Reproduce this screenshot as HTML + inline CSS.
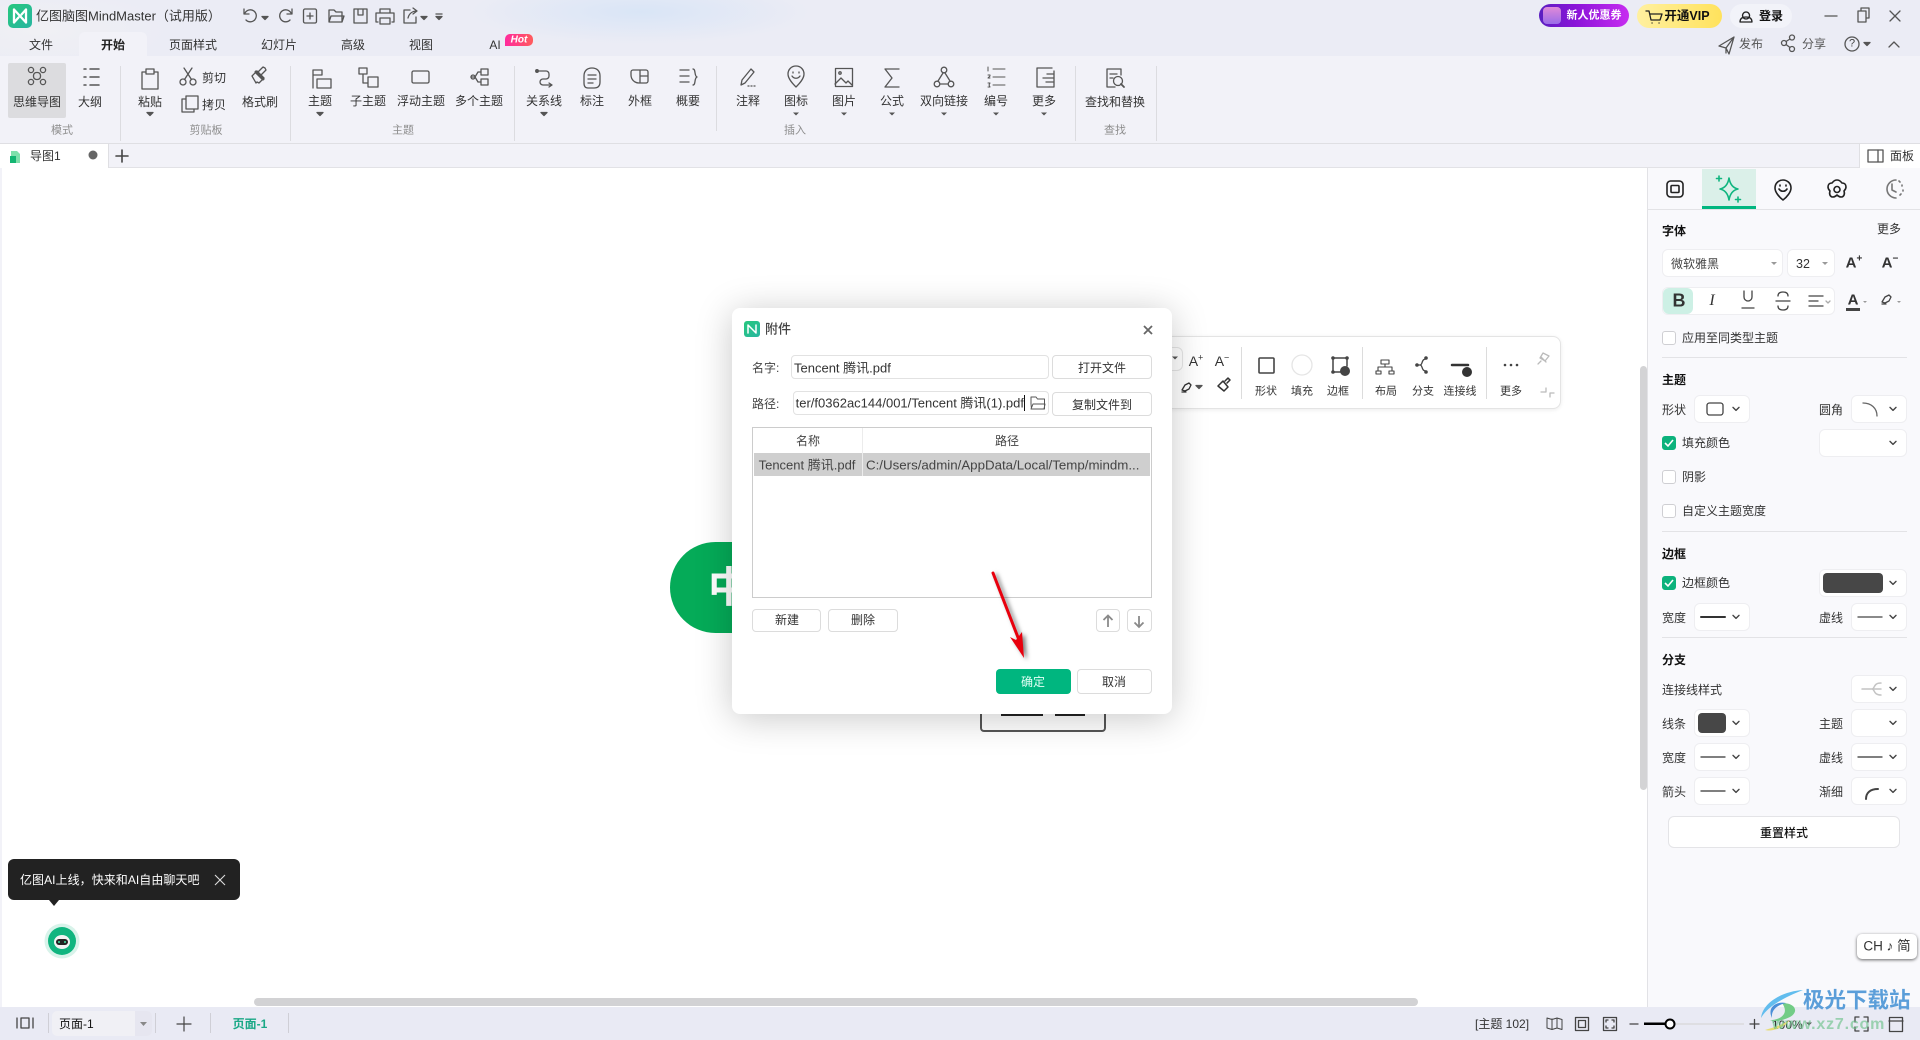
<!DOCTYPE html>
<html lang="zh-CN"><head><meta charset="utf-8"><title>亿图脑图MindMaster</title>
<style>
html,body{margin:0;padding:0;width:1920px;height:1040px;overflow:hidden;background:#fff}
body{position:relative;font:12px "Liberation Sans","Noto Sans CJK SC",sans-serif;color:#333}
div,svg,span.a{position:absolute}
.t,.l,.r{position:absolute;white-space:nowrap;line-height:1}
.t{transform:translate(-50%,-50%)}
.l{transform:translateY(-50%)}
.r{transform:translate(-100%,-50%)}
.g{color:#8d8d8d;font-size:11px}
.b{font-weight:700;color:#111}
.s{background:#fff;border:1px solid #eeeef1;border-radius:6px;box-sizing:border-box}
.c{width:14px;height:14px;border:1px solid #cfcfd3;background:#fff;border-radius:3px;box-sizing:border-box;left:1662px}
.k{background:#0cb27c;border-color:#0cb27c}
.btn{background:#fff;border:1px solid #dcdcdc;border-radius:4px;box-sizing:border-box}
svg{overflow:visible;left:0;top:0}
.i{fill:none;stroke:#555;stroke-width:1.3;stroke-linecap:round;stroke-linejoin:round}
.sep{background:#dcdce0;width:1px}
</style></head><body>

<!-- title + ribbon backgrounds -->
<div style="left:0;top:0;width:1920px;height:56px;background:radial-gradient(ellipse 170px 32px at 640px 12px,#d9e5f6 0,rgba(217,229,246,0) 100%),radial-gradient(ellipse 130px 40px at 40px 30px,#f0f0f4 0,rgba(240,240,244,0) 100%),#ebecf5"></div>
<div style="left:79px;top:32px;width:68px;height:24px;background:#f2f2f8;border-radius:6px 6px 0 0"></div>
<div style="left:0;top:56px;width:1920px;height:88px;background:#f2f2f8"></div>
<div style="left:0;top:143px;width:1920px;height:25px;background:#f2f2f8;border-top:1px solid #dfdfe3;border-bottom:1px solid #e2e2e6;box-sizing:border-box"></div>
<div style="left:0;top:144px;width:109px;height:24px;background:#fff;border-right:1px solid #dfdfe3;box-sizing:border-box"></div>
<div style="left:1859px;top:144px;width:61px;height:24px;background:#fff;border-left:1px solid #dfdfe3;box-sizing:border-box"></div>
<div style="left:0;top:168px;width:2px;height:839px;background:#f2f2f8"></div>
<div style="left:8px;top:63px;width:58px;height:55px;background:#dcdcdf;border-radius:2px"></div>

<!-- logo -->
<div style="left:8px;top:4px;width:24px;height:24px;border-radius:5px;background:linear-gradient(135deg,#27c77d,#27b6a0)"></div>
<svg width="1920" height="170" viewBox="0 0 1920 170">
<defs>
<path id="car" d="M-3-1.5H3L0 1.5Z" fill="#555"/>
<path id="chev" d="M-3-1.6 0 1.4 3-1.6" fill="none" stroke="#444" stroke-width="1.4" stroke-linecap="round" stroke-linejoin="round"/>
</defs>
<path d="M14 9.500V22.500M26 9.500V22.500M14 9.500 26 22.500M14 22.500l4.500-5M26 9.500l-4.500 5" fill="none" stroke="#fff" stroke-width="2.300" stroke-linecap="round"/>
<g class="i">
<!-- quick access -->
<g transform="translate(0 -2)">
<path d="M245 15a6 6 0 1 1 1 7M244 11v5h5"/><use href="#car" x="265" y="20"/>
<path d="M291 15a6 6 0 1 0-1 7M292 11v5h-5"/>
<rect x="303.5" y="11" width="13" height="14" rx="1.5"/><path d="M310 15v6M307 18h6"/>
<path d="M329 24V12h5l2 2h6v10zM329 24l2-6h13l-2 6"/>
<path d="M354 11h13v14h-13zM358 11v6h5v-6"/>
<path d="M380 15v-4h10v4M378 24h-2v-9h18v9h-2M380 20h10v6h-10z"/>
<path d="M410 12h-6v13h12v-6M408 20c1-4 4-7 9-7M413 10l4 3-4 3"/><use href="#car" x="424" y="20"/>
<path d="M436 16h6"/><use href="#car" x="439" y="20"/>
</g>
<!-- mode -->
<g transform="translate(37 76)"><circle cx="-6" cy="-6" r="2.6"/><circle cx="6" cy="-6" r="2.6"/><circle cx="-6" cy="6" r="2.6"/><circle cx="6" cy="6" r="2.6"/><rect x="-3.5" y="-3.5" width="7" height="7" rx="3"/></g>
<path d="M84 69h2M90 69h9M84 77h2M90 77h9M84 85h2M90 85h9" stroke-width="1.5"/>
<!-- clipboard -->
<path d="M146 72h-4v17h16V72h-4M146 69h8v5h-8z"/><use href="#car" x="150" y="114"/>
<g transform="translate(188 76)"><circle cx="-5" cy="6" r="3"/><circle cx="5" cy="6" r="3"/><path d="M-3.5 3.5 4-8M3.5 3.5-4-8"/></g>
<path d="M185 99h-4v13h12v-3M185 99v10h12V96h-12z" transform="translate(1 0)"/>
<path d="M252 76l5-5 7 7-5 5-2-1-1 1zM258 72l5-5 2 1 1 2-5 5" fill="none"/><path d="M256 72l7 7" stroke-width="3"/>
<!-- topics -->
<path d="M313 70h9v5h-9zM313 75v13M317 79h14v9h-14z"/><use href="#car" x="320" y="114"/>
<path d="M359 68h8v6h-8zM363 74v9h5M368 77h10v10h-10z"/>
<rect x="412" y="71" width="17" height="12" rx="1.5"/>
<path d="M471 77h4l3-5h3M475 77l3 5h3M481 69h7v6h-7zM481 79h7v6h-7z"/><circle cx="473" cy="77" r="2"/>
<!-- relation -->
<path d="M537 71h9a3 3 0 0 1 3 3v2a3 3 0 0 1-3 3h-3a3 3 0 0 0-3 3v0a3 3 0 0 0 3 3h9M549 83l3 2-3 2"/><circle cx="537" cy="71" r="1.3" fill="#555"/><use href="#car" x="544" y="114"/>
<path d="M592 68c5 0 8 3 8 8v6c0 4-2 6-6 6h-6c-3 0-4-2-4-5v-7c0-5 3-8 8-8zM588 75h8M588 79h8M588 83h5"/>
<path d="M640 70h-7a2 2 0 0 0-2 2v3a8 8 0 0 0 8 8h7a2 2 0 0 0 2-2V72a2 2 0 0 0-2-2zM640 70v13M640 76h8"/>
<path d="M680 70h9M680 76h9M680 82h9M693 69c3 0 1 7 4 8-3 1-1 8-4 8"/>
<!-- insert -->
<path d="M741 85l1-5 9-11 3 3-9 11zM748 86h1M751 86h1M754 86h1"/>
<path d="M796 66c5 0 8 4 8 8 0 5-5 10-8 13-3-3-8-8-8-13 0-4 3-8 8-8zM793 72v1M799 72v1M792 76c2 3 6 3 8 0"/>
<rect x="835.5" y="68.500" width="17" height="18"/><path d="M835 84l6-6 5 5 2-2 4 4"/><circle cx="840" cy="73" r="1.200"/>
<path d="M899 69h-14l7 9-7 9h14"/>
<circle cx="944" cy="70" r="2.800"/><circle cx="937" cy="84" r="2.800"/><circle cx="951" cy="84" r="2.800"/><path d="M943 73l-5 8M945 73l5 8M940 84h8"/>
<path d="M993 69h12M993 77h12M993 85h12M988 67v4M988 75h2v1l-2 2h2M988 83h2l-1 2 1 2h-2" stroke-width="1"/>
<path d="M1052 68h-15v19h17V71M1043 78h10M1046 82h7M1047 74h6"/>
<path d="M1107 69h14v6M1107 69v18h8M1110 74h7M1110 78h3"/><circle cx="1118" cy="81" r="4.500"/><path d="M1121 84l3 3" stroke-width="1.800"/>
<!-- row2 right -->
<path d="M1719 46l15-9-5 17-3-6zM1726 48l8-11M1726 48v5"/>
<circle cx="1784" cy="43" r="2.500"/><circle cx="1792" cy="37.500" r="2.500"/><circle cx="1792" cy="49" r="2.500"/><path d="M1786 41.500l4-2.500M1786 44.500l4 3"/>
<circle cx="1852" cy="44" r="7"/><use href="#car" x="1867" y="44"/>
<path d="M1889 47l5-5 5 5"/>
<!-- window controls -->
<path d="M1825 16h12"/><path d="M1858 11h8v11h-8zM1861 11v-3h8v10h-3"/><path d="M1890 11l10 10M1900 11l-10 10"/>
<!-- tab bar -->
<path d="M116 156h12M122 150v12" stroke="#444" stroke-width="1.6"/>
<rect x="1868" y="150" width="15" height="12"/><path d="M1878 150v12"/>
</g>
<circle cx="93" cy="155" r="4.500" fill="#666"/>
<path d="M11 151h6l3 3v9h-9z" fill="#7fe0ab"/><rect x="10" y="156" width="6" height="7" fill="#13b572"/>
<!-- separators -->
<g fill="#dcdce0"><rect x="120" y="66" width="1" height="75"/><rect x="290" y="66" width="1" height="75"/><rect x="514" y="66" width="1" height="75"/><rect x="716" y="66" width="1" height="65"/><rect x="1075" y="66" width="1" height="75"/><rect x="1156" y="66" width="1" height="75"/></g>
<g><use href="#car" x="796" y="114"/><use href="#car" x="844" y="114"/><use href="#car" x="892" y="114"/><use href="#car" x="944" y="114"/><use href="#car" x="996" y="114"/><use href="#car" x="1044" y="114"/></g>
</svg>

<span class="l" style="left:36px;top:16px;font-size:13px;color:#333">亿图脑图MindMaster（试用版）</span>
<span class="t" style="left:41px;top:45px">文件</span>
<span class="t" style="left:113px;top:45px;font-weight:700;color:#222">开始</span>
<span class="t" style="left:193px;top:45px">页面样式</span>
<span class="t" style="left:279px;top:45px">幻灯片</span>
<span class="t" style="left:353px;top:45px">高级</span>
<span class="t" style="left:421px;top:45px">视图</span>
<span class="t" style="left:495px;top:45px">AI</span>
<div style="left:505px;top:34px;width:28px;height:12px;border-radius:5px 5px 5px 0;background:linear-gradient(90deg,#ff2a9d,#ff5c5c)"></div>
<span class="t" style="left:519px;top:40px;color:#fff;font:italic 700 10px 'Liberation Sans',sans-serif">Hot</span>

<span class="t" style="left:37px;top:102px">思维导图</span><span class="t" style="left:90px;top:102px">大纲</span>
<span class="t" style="left:150px;top:102px">粘贴</span><span class="t" style="left:214px;top:78px">剪切</span><span class="t" style="left:214px;top:105px">拷贝</span><span class="t" style="left:260px;top:102px">格式刷</span>
<span class="t" style="left:320px;top:101px">主题</span><span class="t" style="left:368px;top:101px">子主题</span><span class="t" style="left:421px;top:101px">浮动主题</span><span class="t" style="left:479px;top:101px">多个主题</span>
<span class="t" style="left:544px;top:101px">关系线</span><span class="t" style="left:592px;top:101px">标注</span><span class="t" style="left:640px;top:101px">外框</span><span class="t" style="left:688px;top:101px">概要</span>
<span class="t" style="left:748px;top:101px">注释</span><span class="t" style="left:796px;top:101px">图标</span><span class="t" style="left:844px;top:101px">图片</span><span class="t" style="left:892px;top:101px">公式</span><span class="t" style="left:944px;top:101px">双向链接</span><span class="t" style="left:996px;top:101px">编号</span><span class="t" style="left:1044px;top:101px">更多</span>
<span class="t" style="left:1115px;top:102px">查找和替换</span>
<span class="t g" style="left:62px;top:131px">模式</span><span class="t g" style="left:206px;top:131px">剪贴板</span><span class="t g" style="left:403px;top:131px">主题</span><span class="t g" style="left:795px;top:131px">插入</span><span class="t g" style="left:1115px;top:131px">查找</span>
<span class="l" style="left:30px;top:156px">导图1</span>
<span class="t" style="left:1902px;top:156px">面板</span>

<!-- top right pills -->
<div style="left:1539px;top:4px;width:90px;height:23px;border-radius:12px;background:linear-gradient(90deg,#5a1fc0,#8a14d8 40%,#c72cf0)"></div>
<div style="left:1543px;top:7px;width:18px;height:17px;border-radius:4px;background:linear-gradient(#e08ad8,#9a6ce8)"></div>
<span class="t" style="left:1594px;top:16px;color:#fff;font-size:11px;font-weight:700">新人优惠券</span>
<div style="left:1637px;top:4px;width:85px;height:24px;border-radius:12px;background:linear-gradient(90deg,#fff0a0,#ffe25c)"></div>
<span class="t" style="left:1687px;top:16px;color:#111;font-size:12.500px;font-weight:700">开通VIP</span>
<svg width="1920" height="40"><path class="i" style="stroke:#222" d="M1646 11h3l2 9h9l2-6h-12M1652 23h.1M1659 23h.1"/></svg>
<div style="left:1730px;top:4px;width:62px;height:24px;border-radius:12px;background:#f2f3f9"></div>
<svg width="1920" height="40"><path class="i" style="stroke:#222" d="M1746 16a3.500 3.500 0 1 0 .1 0M1740 26c0-4 3-5 6-5s6 1 6 5z" transform="translate(0 -4)"/></svg>
<span class="t" style="left:1771px;top:16px;font-weight:700;color:#111">登录</span>
<span class="t" style="left:1751px;top:44px;color:#555">发布</span><span class="t" style="left:1814px;top:44px;color:#555">分享</span><span class="t" style="left:1852px;top:44px;color:#444;font-size:11px">?</span>

<!-- Topic behind dialog -->
<div style="left:670px;top:542px;width:240px;height:91px;border-radius:46px;background:#05ab58"></div>
<span class="l" style="left:708px;top:588px;font-size:42px;font-weight:700;color:#fff">中</span>
<div style="left:980px;top:660px;width:126px;height:72px;border:2px solid #555;border-radius:4px;box-sizing:border-box;background:#fff"></div>
<div style="left:1001px;top:712px;width:42px;height:4px;background:#222"></div><div style="left:1055px;top:712px;width:30px;height:4px;background:#222"></div>

<!-- Floating toolbar -->
<div style="left:1100px;top:336px;width:461px;height:73px;background:#fff;border:1px solid #e4e4e4;border-radius:8px;box-sizing:border-box;box-shadow:0 1px 4px rgba(0,0,0,.08)"></div>
<div class="s" style="left:1100px;top:347px;width:83px;height:24px;border-color:#e6e6e6"></div>
<svg width="1920" height="420">
<use href="#car" x="1175" y="358"/>
<g class="i">
<rect x="1259" y="358" width="15" height="15" rx="1" stroke="#444" stroke-width="1.600"/>
<circle cx="1302" cy="365" r="10" stroke="#e5e5e5"/>
<path d="M1333 358h14v8M1333 358v14h8" stroke="#444" stroke-width="1.500"/>
<path d="M1381 360h8v4h-8zM1385 364v3M1378 371v-4h14v4M1376 371h5v3h-5zM1389 371h5v3h-5z" stroke="#444" stroke-width="1.100"/>
<path d="M1416 365h4M1420 365c3 0 1-6 6-6M1420 365c3 0 1 6 6 6" stroke="#444"/>
<path d="M1452 365h16" stroke="#333" stroke-width="2.500"/>
<path d="M1182 390l3-5 4-2 2 2-2 4-4 2zM1182 392h4" stroke="#333"/><use href="#car" x="1199" y="387"/>
<path d="M1218 386l5-5 5 6-4 4zM1225 381l3-3 2 2-3 3" stroke="#333" stroke-width="1.500"/>
<path d="M1541 357l5 5M1543 353l6 3-4 5-5-3zM1541 361l-3 3" stroke="#bbb"/>
<path d="M1541 392h5v-4M1550 397v-4h4" stroke="#bbb"/>
</g>
<circle cx="1345" cy="371" r="5" fill="#444"/><circle cx="1467" cy="372" r="5" fill="#333"/>
<g fill="#444"><circle cx="1333" cy="358" r="1.800"/><circle cx="1347" cy="358" r="1.800"/><circle cx="1333" cy="372" r="1.800"/><circle cx="1417" cy="365" r="1.800"/><circle cx="1426" cy="358" r="1.800"/><circle cx="1426" cy="372" r="1.800"/>
<circle cx="1505" cy="365" r="1.300"/><circle cx="1511" cy="365" r="1.300"/><circle cx="1517" cy="365" r="1.300"/></g>
<g fill="#dcdcdc"><rect x="1241" y="347" width="1" height="52"/><rect x="1362" y="347" width="1" height="52"/><rect x="1486" y="347" width="1" height="52"/></g>
</svg>
<span class="t" style="left:1196px;top:361px;font-size:14px">A<sup style="font-size:9px;line-height:0">+</sup></span><span class="t" style="left:1222px;top:361px;font-size:14px">A<sup style="font-size:9px;line-height:0">−</sup></span>
<span class="t" style="left:1266px;top:392px;font-size:11px">形状</span><span class="t" style="left:1302px;top:392px;font-size:11px">填充</span><span class="t" style="left:1338px;top:392px;font-size:11px">边框</span><span class="t" style="left:1386px;top:392px;font-size:11px">布局</span><span class="t" style="left:1423px;top:392px;font-size:11px">分支</span><span class="t" style="left:1460px;top:392px;font-size:11px">连接线</span><span class="t" style="left:1511px;top:392px;font-size:11px">更多</span>

<!-- scrollbars -->
<div style="left:254px;top:998px;width:1164px;height:8px;background:#d2d2d4;border-radius:4px"></div>

<!-- Tooltip & bot -->
<div style="left:8px;top:859px;width:232px;height:41px;background:#222;border-radius:6px"></div>
<svg width="300" height="1040"><path d="M49 900h10l-5 6z" fill="#222"/><path d="M215 875l10 10M225 875l-10 10" stroke="#ddd" stroke-width="1.100" fill="none"/>
<g transform="translate(0 1)"><circle cx="62" cy="940" r="17.500" fill="#d8f3ea"/><circle cx="62" cy="940" r="14" fill="#10b57f"/><ellipse cx="62" cy="941" rx="8" ry="7" fill="#f3f3f3"/><rect x="56" y="938" width="12" height="6" rx="3" fill="#222"/><circle cx="59" cy="941" r="1" fill="#3fe0a0"/><circle cx="65" cy="941" r="1" fill="#3fe0a0"/></g></svg>
<span class="l" style="left:20px;top:880px;color:#fff;letter-spacing:.05px">亿图AI上线，快来和AI自由聊天吧</span>

<!-- Right panel -->
<div style="left:1640px;top:366px;width:7px;height:424px;background:#d3d3d5;border-radius:4px"></div>
<div style="left:1647px;top:168px;width:273px;height:839px;background:#f9f9fc;border-left:1px solid #e2e2e6;box-sizing:border-box"></div>
<div style="left:1648px;top:209px;width:272px;height:1px;background:#e3e3e6"></div>
<div style="left:1702px;top:169px;width:54px;height:40px;background:#dbf0e9;border-bottom:3px solid #00b67f;box-sizing:border-box"></div>

<span class="l b" style="left:1662px;top:231px">字体</span><span class="r" style="left:1901px;top:229px">更多</span>
<div class="s" style="left:1662px;top:249px;width:121px;height:28px"></div><span class="l" style="left:1671px;top:264px;color:#444">微软雅黑</span>
<div class="s" style="left:1787px;top:249px;width:48px;height:28px"></div><span class="l" style="left:1796px;top:264px;font-size:12.500px">32</span>
<div class="s" style="left:1662px;top:287px;width:173px;height:28px"></div>
<div style="left:1663px;top:288px;width:30px;height:26px;background:#cdf0e5;border-radius:6px"></div>
<span class="t" style="left:1679px;top:301px;font:700 18px 'Liberation Sans',sans-serif;color:#333">B</span>
<span class="t" style="left:1712px;top:301px;font:italic 16px 'Liberation Serif',serif;color:#333">I</span>
<span class="t" style="left:1854px;top:263px;font:700 15px 'Liberation Sans',sans-serif">A<sup style="font-size:10px;line-height:0">+</sup></span>
<span class="t" style="left:1890px;top:263px;font:700 15px 'Liberation Sans',sans-serif">A<sup style="font-size:10px;line-height:0">−</sup></span>
<span class="t" style="left:1853px;top:300px;font:700 15px 'Liberation Sans',sans-serif">A</span>

<div class="c" style="top:331px"></div><span class="l" style="left:1682px;top:338px">应用至同类型主题</span>
<div style="left:1662px;top:357px;width:245px;height:1px;background:#e3e3e6"></div>
<span class="l b" style="left:1662px;top:380px">主题</span>
<span class="l" style="left:1662px;top:410px">形状</span><div class="s" style="left:1694px;top:395px;width:56px;height:28px"></div>
<span class="l" style="left:1819px;top:410px">圆角</span><div class="s" style="left:1851px;top:395px;width:56px;height:28px"></div>
<div class="c k" style="top:436px"></div><span class="l" style="left:1682px;top:443px">填充颜色</span><div class="s" style="left:1819px;top:429px;width:88px;height:28px"></div>
<div class="c" style="top:470px"></div><span class="l" style="left:1682px;top:477px">阴影</span>
<div class="c" style="top:504px"></div><span class="l" style="left:1682px;top:511px">自定义主题宽度</span>
<div style="left:1662px;top:531px;width:245px;height:1px;background:#e3e3e6"></div>
<span class="l b" style="left:1662px;top:554px">边框</span>
<div class="c k" style="top:576px"></div><span class="l" style="left:1682px;top:583px">边框颜色</span><div class="s" style="left:1819px;top:569px;width:88px;height:28px"></div><div style="left:1823px;top:573px;width:60px;height:20px;border-radius:4px;background:#474747"></div>
<span class="l" style="left:1662px;top:618px">宽度</span><div class="s" style="left:1694px;top:603px;width:56px;height:28px"></div>
<span class="l" style="left:1819px;top:618px">虚线</span><div class="s" style="left:1851px;top:603px;width:56px;height:28px"></div>
<div style="left:1662px;top:637px;width:245px;height:1px;background:#e3e3e6"></div>
<span class="l b" style="left:1662px;top:660px">分支</span>
<span class="l" style="left:1662px;top:690px">连接线样式</span><div class="s" style="left:1851px;top:675px;width:56px;height:28px"></div>
<span class="l" style="left:1662px;top:724px">线条</span><div class="s" style="left:1694px;top:709px;width:56px;height:28px"></div><div style="left:1698px;top:713px;width:28px;height:20px;border-radius:4px;background:#474747"></div>
<span class="l" style="left:1819px;top:724px">主题</span><div class="s" style="left:1851px;top:709px;width:56px;height:28px"></div>
<span class="l" style="left:1662px;top:758px">宽度</span><div class="s" style="left:1694px;top:743px;width:56px;height:28px"></div>
<span class="l" style="left:1819px;top:758px">虚线</span><div class="s" style="left:1851px;top:743px;width:56px;height:28px"></div>
<span class="l" style="left:1662px;top:792px">箭头</span><div class="s" style="left:1694px;top:777px;width:56px;height:28px"></div>
<span class="l" style="left:1819px;top:792px">渐细</span><div class="s" style="left:1851px;top:777px;width:56px;height:28px"></div>
<div class="s" style="left:1668px;top:816px;width:232px;height:32px;border-color:#e4e4e7"></div><span class="t" style="left:1784px;top:833px;color:#111;font-weight:500">重置样式</span>

<svg width="1920" height="900">
<g class="i" style="stroke:#222;stroke-width:1.600">
<rect x="1667" y="181" width="16" height="16" rx="3.500"/><rect x="1671" y="185.500" width="8" height="7" rx="1"/>
<path d="M1783 180c4 0 8 3 8 8 0 4-4 9-8 12-4-3-8-8-8-12 0-5 4-8 8-8zM1780 185v1M1786 185v1M1779 189c2 3 6 3 8 0"/>
<path d="M1837 180c3 0 4 2 5 3 3 0 4 2 4 4 0 2-1 3-2 4 1 3 0 6-3 6-2 0-3-1-4-2-1 1-2 2-4 2-3 0-4-3-3-6-1-1-2-2-2-4 0-2 1-4 4-4 1-1 2-3 5-3z"/><circle cx="1837" cy="189.500" r="3"/>
</g>
<g class="i" style="stroke:#777;stroke-width:1.600"><path d="M1896 180a9 9 0 1 0 0 18"/><path d="M1892 184v6l4 2"/><path d="M1899 181l1 1M1902 185v1M1903 190v1M1901 194l-1 1"/></g>
<g class="i" style="stroke:#10b57f;stroke-width:1.600"><path d="M1729 178c1 6 4 10 9 11-5 1-8 5-9 11-1-6-4-10-9-11 5-1 8-5 9-11zM1719 176v5M1716.500 178.500h5M1738 197v5M1735.500 199.500h5"/></g>
<g fill="#999"><path d="M1771 262h6l-3 3z"/><path d="M1822 262h6l-3 3z"/></g>
<g fill="#999"><path d="M1863 301h4l-2 2zM1897 301h4l-2 2z"/></g>
<g class="i" style="stroke:#444">
<path d="M1744 291v6a4 4 0 0 0 8 0v-6M1742 308h12"/>
<path d="M1778 296c0-3 2-4 5-4s5 1 5 4M1778 306c0 3 2 4 5 4s5-1 5-4M1776 301h14"/>
<path d="M1809 296h14M1809 301h9M1809 306h14"/><path d="M1826 301l2 2 2-2" stroke="#aaa"/>
<path d="M1882 302l3-5 4-2 2 2-2 4-4 2zM1882 304h4"/>
<rect x="1707" y="403" width="16" height="12" rx="2.500" stroke-width="1.300"/>
<path d="M1863 403c8 0 14 5 14 13" stroke="#666"/>
<path d="M1701 617h24" stroke="#333" stroke-width="2"/><path d="M1858 617h24"/>
<path d="M1701 757h24M1858 757h24M1701 791h24" stroke="#333"/>
<path d="M1866 799c0-6 4-10 12-10" stroke-width="2"/>
</g>
<g class="i" style="stroke:#c4c4c4;stroke-width:1.500"><path d="M1862 689h10M1872 689c3 0 1-6 9-6M1872 689c3 0 1 6 9 6M1872 689h9"/></g>
<g fill="#444"><rect x="1846" y="308" width="14" height="3"/></g>
<path d="M1665 443l3 3 5-6" fill="none" stroke="#fff" stroke-width="1.600"/>
<path d="M1665 583l3 3 5-6" fill="none" stroke="#fff" stroke-width="1.600"/>
<use href="#chev" x="1736" y="409"/><use href="#chev" x="1893" y="409"/><use href="#chev" x="1893" y="443"/><use href="#chev" x="1893" y="583"/><use href="#chev" x="1736" y="617"/><use href="#chev" x="1893" y="617"/><use href="#chev" x="1893" y="689"/><use href="#chev" x="1736" y="723"/><use href="#chev" x="1893" y="723"/><use href="#chev" x="1736" y="757"/><use href="#chev" x="1893" y="757"/><use href="#chev" x="1736" y="791"/><use href="#chev" x="1893" y="791"/>
</svg>

<!-- Status bar -->
<div style="left:0;top:1007px;width:1920px;height:33px;background:#e9eaf4"></div>
<div style="left:52px;top:1011px;width:100px;height:25px;background:#f0f0f5;border-radius:5px"></div>
<div style="left:135px;top:1011px;width:17px;height:25px;background:#e6e6f0;border-radius:0 5px 5px 0"></div>
<span class="l" style="left:59px;top:1024px;color:#111">页面-1</span>
<span class="t" style="left:250px;top:1024px;color:#1aa886;font-weight:700">页面-1</span>
<span class="l" style="left:1475px;top:1024px">[主题 102]</span>
<span class="l" style="left:1772px;top:1025px;font-size:12px">100%</span>
<svg width="1920" height="1040">
<g fill="#cfcfd6"><rect x="48" y="1013" width="1" height="20"/><rect x="155" y="1013" width="1" height="20"/><rect x="210" y="1013" width="1" height="20"/><rect x="288" y="1013" width="1" height="20"/></g>
<path d="M140 1022h7l-3.500 4z" fill="#888"/>
<g class="i" style="stroke:#444">
<path d="M17 1018v10M33 1018v10M21 1018h8v10h-8z"/>
<path d="M177 1024h14M184 1017v14" stroke-width="1.200"/>
<path d="M1547 1018l5 1.500 5-1.500 5 1.500v10l-5-1.500-5 1.500-5-1.500zM1552 1019v10M1557 1018v10" stroke-width="1"/>
<rect x="1575.500" y="1017.500" width="13" height="13"/><rect x="1578.500" y="1020.500" width="7" height="7"/>
<rect x="1603.500" y="1017.500" width="13" height="13"/><path d="M1606 1022v-2h2M1614 1022v-2h-2M1606 1026v2h2M1614 1026v2h-2"/>
<path d="M1630 1024h8M1750 1024h9M1754.500 1019.500v9"/>
<path d="M1855 1022v-5h4M1868 1022v-5h-4M1855 1027v4h4M1868 1027v4h-4"/>
<rect x="1889.500" y="1017.500" width="13" height="14"/><path d="M1889 1021h14"/>
</g>
<rect x="1644" y="1023" width="100" height="2" fill="#dedee2"/><rect x="1644" y="1022.500" width="26" height="2.500" fill="#000"/><circle cx="1670" cy="1024" r="4.500" fill="#fff" stroke="#000" stroke-width="2"/>
<use href="#car" x="1809" y="1024"/>
</svg>

<!-- CH pill -->
<div style="left:1857px;top:934px;width:60px;height:25px;background:#fff;border-radius:5px;box-shadow:0 1px 3px rgba(0,0,0,.6)"></div>
<span class="t" style="left:1887px;top:946px;font-size:13.500px;color:#333">CH ♪ 简</span>

<!-- Watermark -->
<svg width="1920" height="1040">
<path d="M1803 990C1785 991 1763 1001 1761 1018 1768 1006 1785 997 1803 990Z" fill="#62bdee"/>
<path d="M1782 1003C1796 1003 1799 1012 1790 1017 1782 1021 1774 1022 1770 1020 1780 1020 1790 1014 1782 1003Z" fill="#72cc86"/>
<path d="M1786 1003C1775 1001 1767 1008 1772 1018 1771 1010 1777 1005 1786 1003Z" fill="#4a8ed8"/>
<path d="M1765 1030C1772 1028 1782 1025 1790 1020 1785 1027 1773 1032 1765 1030Z" fill="#e8dd74"/>
</svg>
<span class="l" style="left:1803px;top:1001px;font-size:21.500px;font-weight:700;color:#5b9ed9">极光下载站</span>
<span class="l" style="left:1772px;top:1025px;font:700 16px 'Liberation Sans',sans-serif;color:rgba(100,190,130,.6);letter-spacing:.8px">www.xz7.com</span>

<!-- Dialog -->
<div style="left:732px;top:308px;width:440px;height:406px;background:#fff;border-radius:8px;box-shadow:0 4px 36px rgba(0,0,0,.22)"></div>
<div style="left:744px;top:321px;width:16px;height:16px;border-radius:3px;background:linear-gradient(135deg,#27c77d,#27b6a0)"></div>
<span class="l" style="left:765px;top:329px;font-size:13px;font-weight:500;color:#444">附件</span>
<span class="l" style="left:752px;top:368px;color:#444">名字:</span>
<div class="btn" style="left:791px;top:355px;width:258px;height:24px;border-color:#e2e2e2"></div>
<span class="l" style="left:794px;top:368px;font-size:13px">Tencent 腾讯.pdf</span>
<div class="btn" style="left:1052px;top:355px;width:100px;height:24px"></div><span class="t" style="left:1102px;top:368px">打开文件</span>
<span class="l" style="left:752px;top:404px;color:#444">路径:</span>
<div class="btn" style="left:793px;top:391px;width:256px;height:24px;border-color:#e2e2e2"></div>
<span class="r" style="left:1024px;top:403px;font-size:13px;max-width:230px;overflow:hidden;direction:rtl;padding:2px 0"><bdi>ter/f0362ac144/001/Tencent 腾讯(1).pdf</bdi></span>
<div style="left:1024px;top:395px;width:1px;height:16px;background:#111"></div>
<div class="btn" style="left:1052px;top:392px;width:100px;height:24px"></div><span class="t" style="left:1102px;top:405px">复制文件到</span>
<div style="left:752px;top:427px;width:400px;height:171px;border:1px solid #ccc;box-sizing:border-box;background:#fff"></div>
<div style="left:754px;top:453px;width:396px;height:23px;background:#cfcfcf"></div>
<div style="left:862px;top:428px;width:1px;height:48px;background:#ececec"></div>
<span class="t" style="left:808px;top:441px;color:#444">名称</span><span class="t" style="left:1007px;top:441px;color:#444">路径</span>
<span class="t" style="left:807px;top:465px;color:#444;font-size:13px">Tencent 腾讯.pdf</span>
<span class="l" style="left:866px;top:465px;color:#444;font-size:13.300px">C:/Users/admin/AppData/Local/Temp/mindm...</span>
<div class="btn" style="left:752px;top:609px;width:69px;height:23px"></div><span class="t" style="left:787px;top:620px">新建</span>
<div class="btn" style="left:828px;top:609px;width:70px;height:23px"></div><span class="t" style="left:863px;top:620px">删除</span>
<div class="btn" style="left:1096px;top:609px;width:24px;height:23px"></div><div class="btn" style="left:1127px;top:609px;width:25px;height:23px"></div>
<div style="left:996px;top:669px;width:75px;height:25px;background:#00b67f;border-radius:4px"></div><span class="t" style="left:1033px;top:682px;color:#e4fff6">确定</span>
<div class="btn" style="left:1077px;top:669px;width:75px;height:25px"></div><span class="t" style="left:1114px;top:682px">取消</span>
<svg width="1920" height="1040">
<path d="M748 325v8M756 325v8M748 325l8 8" fill="none" stroke="#fff" stroke-width="1.500" stroke-linecap="round"/>
<path d="M1144 326l8 8M1152 326l-8 8" stroke="#666" stroke-width="1.800" fill="none"/>
<g transform="translate(0 4)"><path d="M1031 400v-7h5l1.500 2h7v10h-13zM1031 405l2-5h12l-1 5" class="i" style="stroke:#555;stroke-width:1"/></g>
<path d="M1108 627v-11M1103.500 620l4.500-4.500 4.500 4.500M1139 616v11M1134.500 622.500l4.500 4.500 4.500-4.500" fill="none" stroke="#8a8a8a" stroke-width="1.800"/>
<g style="filter:drop-shadow(3px 2px 2px rgba(0,0,0,.5))">
<path d="M993 573l26 67" stroke="#e8000d" stroke-width="3" stroke-linecap="round"/>
<path d="M1024 658l-14-21 6 3 6-8z" fill="#e8000d"/>
</g>
</svg>
</body></html>
